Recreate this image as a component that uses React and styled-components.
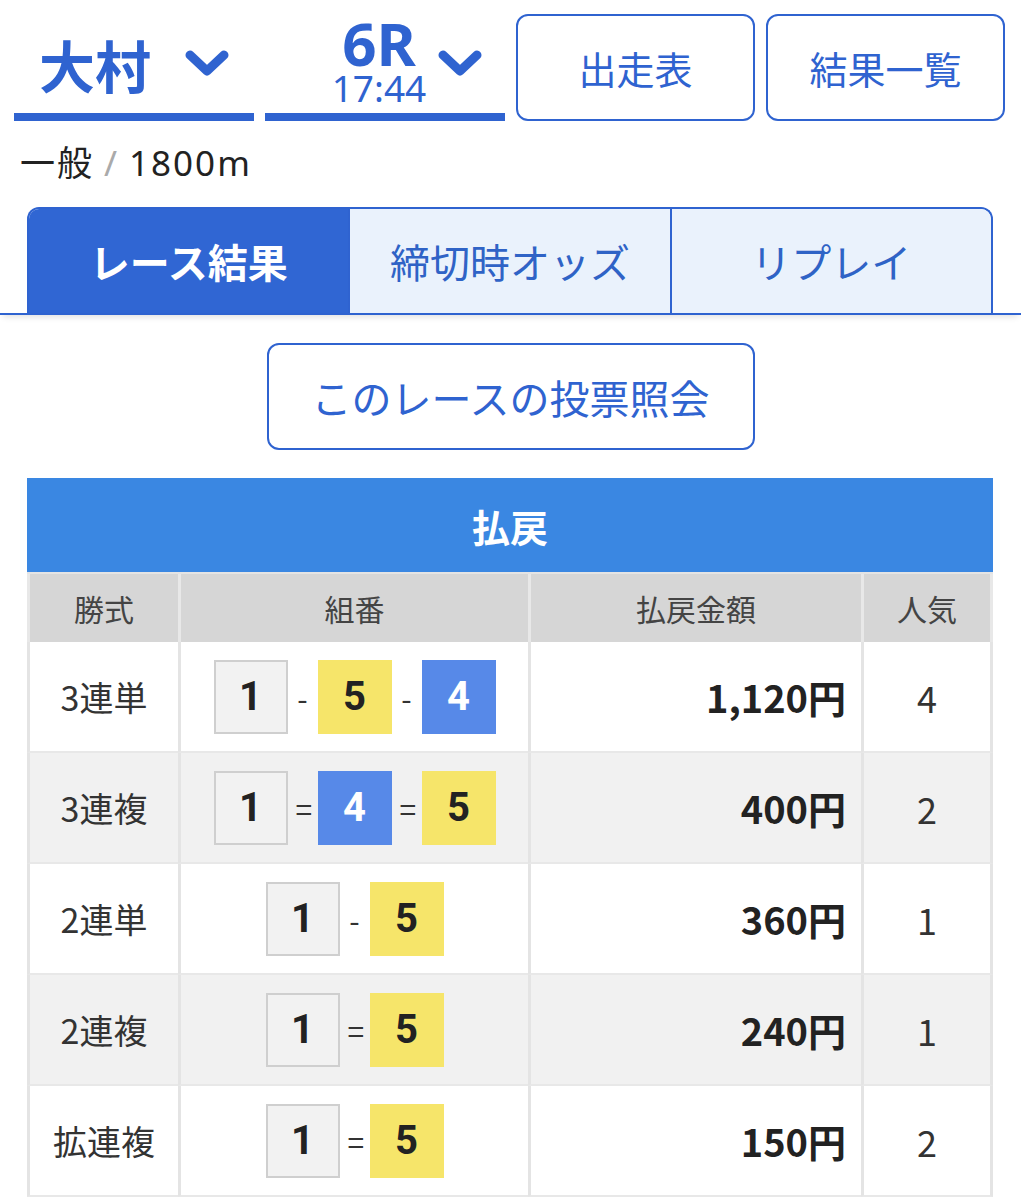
import styled, { createGlobalStyle } from "styled-components";

const GlobalStyle = createGlobalStyle`
  body {
    margin: 0;
    background: #fff;
    font-family: "Noto Sans CJK JP", "Noto Sans", sans-serif;
    color: #222;
  }
`;

const Page = styled.div`
  width: 1021px;
`;

const TopBar = styled.div`
  display: flex;
  gap: 11px;
  padding: 14px 15px 0 14px;
`;

const Select = styled.div`
  width: 240px;
  height: 107px;
  box-sizing: border-box;
  border-bottom: 8px solid #2f63d0;
  display: flex;
  align-items: center;
  justify-content: center;
  gap: ${(p) => p.$gap || 30}px;
  padding-left: ${(p) => p.$shift || 0}px;
  color: #2f63d0;
`;

const Venue = styled.span`
  font-size: 56px;
  font-weight: 700;
  line-height: 1;
`;

const RaceBlock = styled.div`
  display: flex;
  flex-direction: column;
  align-items: center;
  padding-bottom: 8px;
`;

const RaceNo = styled.span`
  font-family: "Noto Sans", sans-serif;
  font-size: 60px;
  font-weight: 700;
  line-height: 56px;
`;

const RaceTime = styled.span`
  font-family: "Noto Sans", sans-serif;
  font-size: 37px;
  line-height: 34px;
`;

const OutlineButton = styled.div`
  width: ${(p) => p.$w || 239}px;
  height: 107px;
  box-sizing: border-box;
  border: 2px solid #2f63d0;
  border-radius: 12px;
  display: flex;
  align-items: center;
  justify-content: center;
  color: #2f63d0;
  font-size: ${(p) => p.$size || 38}px;
  background: #fff;
`;

const SubLine = styled.div`
  padding: 22px 0 0 20px;
  font-family: "Noto Sans", "Noto Sans CJK JP", sans-serif;
  font-size: 35px;
  letter-spacing: 2px;
  line-height: 40px;
  color: #222;
`;

const Slash = styled.span`
  color: #aaa;
  margin: 0 10px;
`;

const TabBar = styled.div`
  margin-top: 24px;
  border-bottom: 2px solid #2f63d0;
  box-shadow: 0 5px 6px -3px rgba(0, 0, 0, 0.12);
  padding: 0 28px 0 27px;
`;

const Tabs = styled.div`
  display: flex;
  height: 104px;
  border: 2px solid #2f63d0;
  border-bottom: none;
  border-radius: 12px 12px 0 0;
  overflow: hidden;
`;

const Tab = styled.div`
  flex: 1;
  display: flex;
  align-items: center;
  justify-content: center;
  font-size: 40px;
  background: ${(p) => (p.$active ? "#3066d3" : "#eaf2fc")};
  color: ${(p) => (p.$active ? "#fff" : "#2f63c6")};
  font-weight: ${(p) => (p.$active ? 700 : 400)};
  & + & {
    border-left: 2px solid #2f63d0;
  }
`;

const Center = styled.div`
  display: flex;
  justify-content: center;
  padding: 28px 0 28px;
`;

const Table = styled.div`
  margin: 0 28px 0 27px;
  display: grid;
  grid-template-columns: 151px 350px 333px 1fr;
`;

const Title = styled.div`
  grid-column: 1 / -1;
  height: 94px;
  background: #3a87e2;
  color: #fff;
  font-size: 38px;
  font-weight: 700;
  display: flex;
  align-items: center;
  justify-content: center;
  border-bottom: 2px solid #e4e4e4;
`;

const HeadCell = styled.div`
  height: 68px;
  background: #d6d6d6;
  color: #444;
  font-size: 30px;
  display: flex;
  align-items: center;
  justify-content: center;
  border-left: 3px solid #e8e8e8;
  &:nth-child(5) {
    border-right: 3px solid #e8e8e8;
  }
`;

const Cell = styled.div`
  height: 111px;
  box-sizing: border-box;
  background: ${(p) => (p.$alt ? "#f1f1f1" : "#fff")};
  border-left: 3px solid #e4e4e4;
  border-right: ${(p) => (p.$last ? "3px solid #e4e4e4" : "none")};
  border-bottom: 2px solid #e8e8e8;
  display: flex;
  align-items: center;
  justify-content: ${(p) => p.$justify || "center"};
  padding-right: ${(p) => p.$pr || 0}px;
  font-size: ${(p) => p.$size || 34}px;
  font-weight: ${(p) => (p.$bold ? 700 : 400)};
  color: ${(p) => (p.$bold ? "#222" : "#333")};
`;

const Combo = styled.div`
  display: flex;
  align-items: center;
  gap: 8px;
`;

const boxColors = {
  1: { bg: "#f2f2f2", fg: "#222", border: "2px solid #cfcfcf" },
  4: { bg: "#5789e8", fg: "#fff", border: "none" },
  5: { bg: "#f6e56a", fg: "#222", border: "none" },
};

const NumBox = styled.div`
  width: 74px;
  height: 74px;
  box-sizing: border-box;
  background: ${(p) => boxColors[p.$n].bg};
  color: ${(p) => boxColors[p.$n].fg};
  border: ${(p) => boxColors[p.$n].border};
  display: flex;
  align-items: center;
  justify-content: center;
  font-family: "Roboto", "Noto Sans", sans-serif;
  font-size: 40px;
  font-weight: 700;
`;

const Sep = styled.span`
  font-size: 30px;
  color: #333;
  width: 14px;
  text-align: center;
`;

const Chevron = () => (
  <svg width="44" height="28" viewBox="0 0 44 28">
    <polyline
      points="5,5 22,21 39,5"
      fill="none"
      stroke="#2f63d0"
      strokeWidth="9"
      strokeLinecap="round"
      strokeLinejoin="round"
    />
  </svg>
);

const rows = [
  { type: "3連単", nums: [1, 5, 4], sep: "-", amount: "1,120円", pop: 4 },
  { type: "3連複", nums: [1, 4, 5], sep: "=", amount: "400円", pop: 2 },
  { type: "2連単", nums: [1, 5], sep: "-", amount: "360円", pop: 1 },
  { type: "2連複", nums: [1, 5], sep: "=", amount: "240円", pop: 1 },
  { type: "拡連複", nums: [1, 5], sep: "=", amount: "150円", pop: 2 },
];

const App = () => {
  return (
    <Page>
      <GlobalStyle />
      <TopBar>
        <Select $gap={34}>
          <Venue>大村</Venue>
          <Chevron />
        </Select>
        <Select $gap={12} $shift={44}>
          <RaceBlock>
            <RaceNo>6R</RaceNo>
            <RaceTime>17:44</RaceTime>
          </RaceBlock>
          <Chevron />
        </Select>
        <OutlineButton>出走表</OutlineButton>
        <OutlineButton>結果一覧</OutlineButton>
      </TopBar>
      <SubLine>
        一般<Slash>/</Slash>1800m
      </SubLine>
      <TabBar>
        <Tabs>
          <Tab $active>レース結果</Tab>
          <Tab>締切時オッズ</Tab>
          <Tab>リプレイ</Tab>
        </Tabs>
      </TabBar>
      <Center>
        <OutlineButton $w={488} $size={40}>
          このレースの投票照会
        </OutlineButton>
      </Center>
      <Table>
        <Title>払戻</Title>
        <HeadCell>勝式</HeadCell>
        <HeadCell>組番</HeadCell>
        <HeadCell>払戻金額</HeadCell>
        <HeadCell>人気</HeadCell>
        {rows.map((r, i) => {
          const alt = i % 2 === 1;
          return [
            <Cell key={`t${i}`} $alt={alt}>
              {r.type}
            </Cell>,
            <Cell key={`c${i}`} $alt={alt}>
              <Combo>
                {r.nums.map((n, j) => [
                  j > 0 && <Sep key={`s${j}`}>{r.sep}</Sep>,
                  <NumBox key={`n${j}`} $n={n}>
                    {n}
                  </NumBox>,
                ])}
              </Combo>
            </Cell>,
            <Cell key={`a${i}`} $alt={alt} $justify="flex-end" $pr={15} $size={38} $bold>
              {r.amount}
            </Cell>,
            <Cell key={`p${i}`} $alt={alt} $last $size={36}>
              {r.pop}
            </Cell>,
          ];
        })}
      </Table>
    </Page>
  );
};

export default App;
